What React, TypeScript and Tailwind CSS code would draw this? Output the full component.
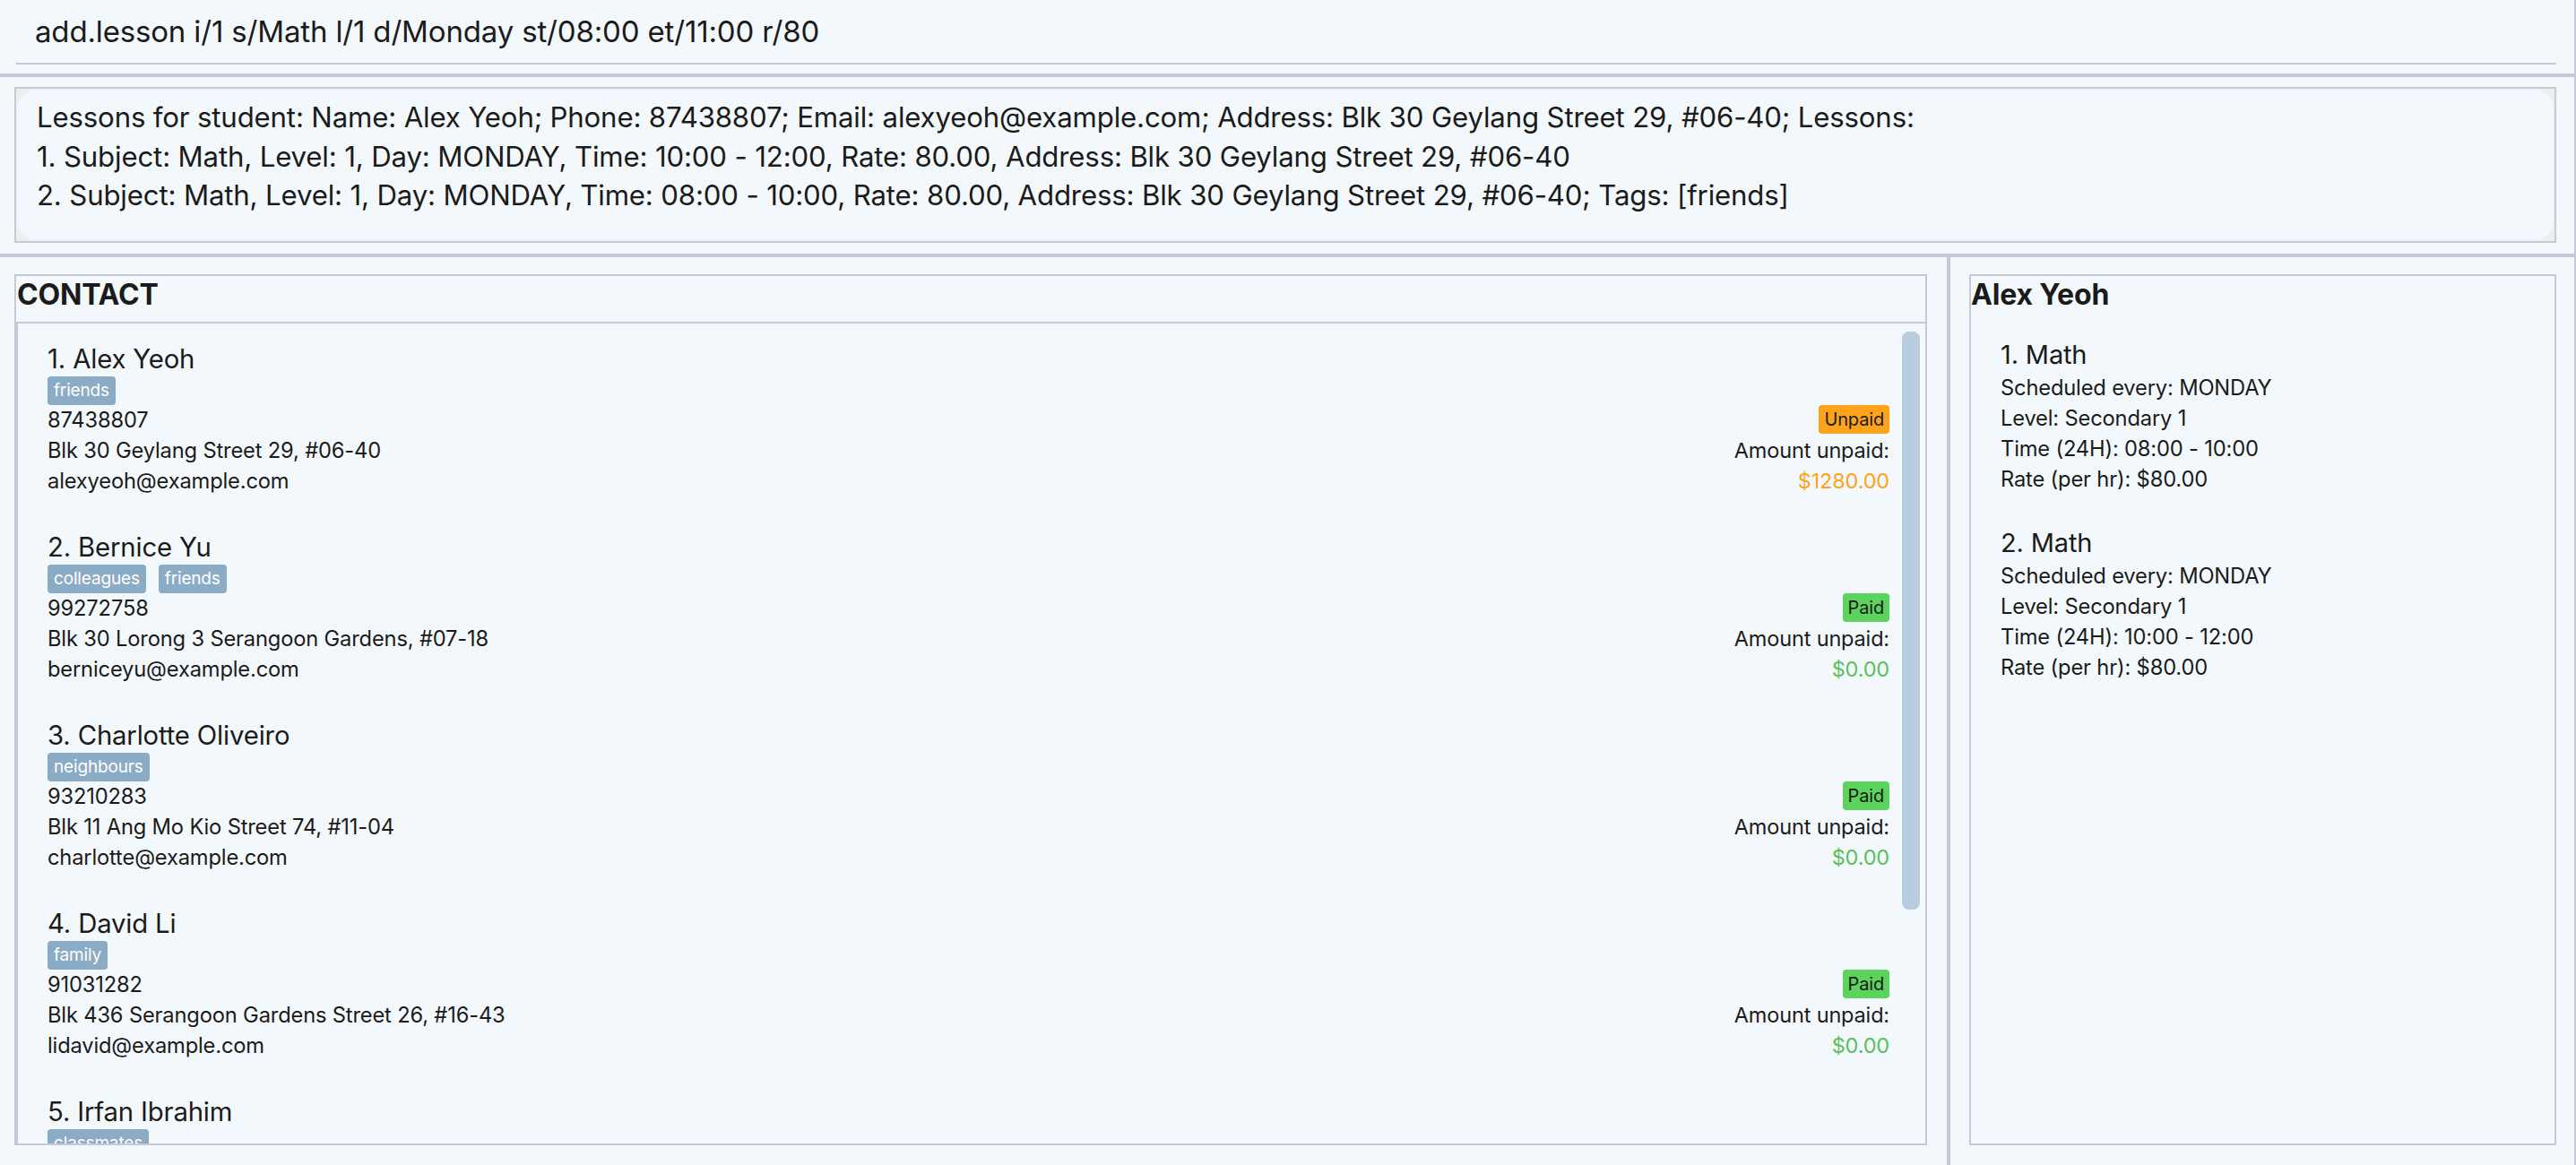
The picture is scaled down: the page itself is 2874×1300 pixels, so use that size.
import React from 'react'

type Contact = {
  name: string
  tags: string[]
  phone: string
  address: string
  email: string
  paid: boolean
  amount: string
}

const contacts: Contact[] = [
  { name: 'Alex Yeoh', tags: ['friends'], phone: '87438807', address: 'Blk 30 Geylang Street 29, #06-40', email: 'alexyeoh@example.com', paid: false, amount: '$1280.00' },
  { name: 'Bernice Yu', tags: ['colleagues', 'friends'], phone: '99272758', address: 'Blk 30 Lorong 3 Serangoon Gardens, #07-18', email: 'berniceyu@example.com', paid: true, amount: '$0.00' },
  { name: 'Charlotte Oliveiro', tags: ['neighbours'], phone: '93210283', address: 'Blk 11 Ang Mo Kio Street 74, #11-04', email: 'charlotte@example.com', paid: true, amount: '$0.00' },
  { name: 'David Li', tags: ['family'], phone: '91031282', address: 'Blk 436 Serangoon Gardens Street 26, #16-43', email: 'lidavid@example.com', paid: true, amount: '$0.00' },
  { name: 'Irfan Ibrahim', tags: ['classmates'], phone: '92492021', address: 'Blk 47 Tampines Street 20, #17-35', email: 'irfan@example.com', paid: true, amount: '$0.00' },
]

const lessons = [
  { subject: 'Math', day: 'MONDAY', level: 'Secondary 1', time: '08:00 - 10:00', rate: '$80.00' },
  { subject: 'Math', day: 'MONDAY', level: 'Secondary 1', time: '10:00 - 12:00', rate: '$80.00' },
]

function ContactCard({ c, i }: { c: Contact; i: number }) {
  return (
    <div className="flex justify-between pl-[33px] pr-[14px] pt-[22px] pb-[17px]">
      <div className="flex flex-col">
        <div className="text-[29.3px] leading-[36px]">{i + 1}. {c.name}</div>
        <div className="flex gap-[14px] mt-[1px]">
          {c.tags.map((t) => (
            <span key={t} className="h-[32px] px-[7px] rounded-[4px] bg-[#8cabc5] text-white text-[19px] leading-[32px]">{t}</span>
          ))}
        </div>
        <div className="text-[23.7px] leading-[34px]">{c.phone}</div>
        <div className="text-[23.7px] leading-[34px]">{c.address}</div>
        <div className="text-[23.7px] leading-[34px]">{c.email}</div>
      </div>
      <div className="flex flex-col items-end justify-end">
        <span className={c.paid ? 'h-[32px] px-[6px] rounded-[4px] bg-[#5cd35c] text-[20px] leading-[32px] mb-[2px]' : 'h-[32px] px-[6px] rounded-[4px] bg-[#ffa31c] text-[20px] leading-[32px] mb-[2px]'}>
          {c.paid ? 'Paid' : 'Unpaid'}
        </span>
        <div className="text-[23.5px] leading-[34px]">Amount unpaid:</div>
        <div className={c.paid ? 'text-[23.5px] leading-[34px] text-[#5cbf5e]' : 'text-[23.5px] leading-[34px] text-[#ffa31c]'}>{c.amount}</div>
      </div>
    </div>
  )
}

function App() {
  return (
    <div className="h-[1300px] w-full overflow-hidden bg-[#f3f8fc] border-r-2 border-[#c6c9d7] flex flex-col font-['Inter',sans-serif] text-[#1b1b1b] tracking-[-0.01em]">
      {/* command box */}
      <div className="h-[82px] pl-[18px] pr-[20px]">
        <div className="h-[72px] border-b-2 border-[#c6c9d7] pl-[21px] pt-[16px] text-[33px] leading-[38px]">
          add.lesson i/1 s/Math l/1 d/Monday st/08:00 et/11:00 r/80
        </div>
      </div>
      <div className="h-[4px] bg-[#c6c9d7]" />

      {/* result display */}
      <div className="h-[197px] pt-[11px] pl-[16px] pr-[20px]">
        <div className="h-[174px] border-2 border-[#c6c9d7] bg-[#eeeeee] p-[1px]">
          <div className="h-full rounded-[22px] bg-[#f3f8fc] pl-[22px] pt-[10px] text-[31.2px] leading-[43.5px]">
            <div>Lessons for student: Name: Alex Yeoh; Phone: 87438807; Email: alexyeoh@example.com; Address: Blk 30 Geylang Street 29, #06-40; Lessons:</div>
            <div>1. Subject: Math, Level: 1, Day: MONDAY, Time: 10:00 - 12:00, Rate: 80.00, Address: Blk 30 Geylang Street 29, #06-40</div>
            <div>2. Subject: Math, Level: 1, Day: MONDAY, Time: 08:00 - 10:00, Rate: 80.00, Address: Blk 30 Geylang Street 29, #06-40; Tags: [friends]</div>
          </div>
        </div>
      </div>
      <div className="h-[4px] bg-[#c6c9d7]" />

      {/* lower split */}
      <div className="flex-1 flex min-h-0">
        <div className="w-[2172px] pl-[16px] pr-[22px] pt-[19px] pb-[22px]">
          <div className="h-full border-2 border-[#c6c9d7] flex flex-col">
            <div className="h-[53px] border-b-2 border-[#c6c9d7] pl-[1px] pt-[1px] text-[32px] leading-[39px] font-bold">CONTACT</div>
            <div className="flex-1 min-h-0 flex border-l-2 border-[#c6c9d7]">
              <div className="flex-1 overflow-hidden">
                {contacts.map((c, i) => (
                  <ContactCard key={c.name} c={c} i={i} />
                ))}
              </div>
              <div className="w-[26px] pt-[9px]">
                <div className="w-[20px] h-[645px] rounded-[8px] bg-[#b8cde0]" />
              </div>
            </div>
          </div>
        </div>
        <div className="w-[4px] bg-[#c6c9d7]" />
        <div className="flex-1 pl-[21px] pr-[20px] pt-[19px] pb-[22px]">
          <div className="h-full border-2 border-[#c6c9d7] flex flex-col">
            <div className="h-[51px] pt-[1px] text-[32px] leading-[39px] font-bold">Alex Yeoh</div>
            {lessons.map((l, i) => (
              <div key={i} className="pl-[33px] pt-[19px] pb-[17px] flex flex-col">
                <div className="text-[29px] leading-[36px] mb-[2px]">{i + 1}. {l.subject}</div>
                <div className="text-[23.7px] leading-[34px]">Scheduled every: {l.day}</div>
                <div className="text-[23.7px] leading-[34px]">Level: {l.level}</div>
                <div className="text-[23.7px] leading-[34px]">Time (24H): {l.time}</div>
                <div className="text-[23.7px] leading-[34px]">Rate (per hr): {l.rate}</div>
              </div>
            ))}
          </div>
        </div>
      </div>
    </div>
  )
}

export default App
